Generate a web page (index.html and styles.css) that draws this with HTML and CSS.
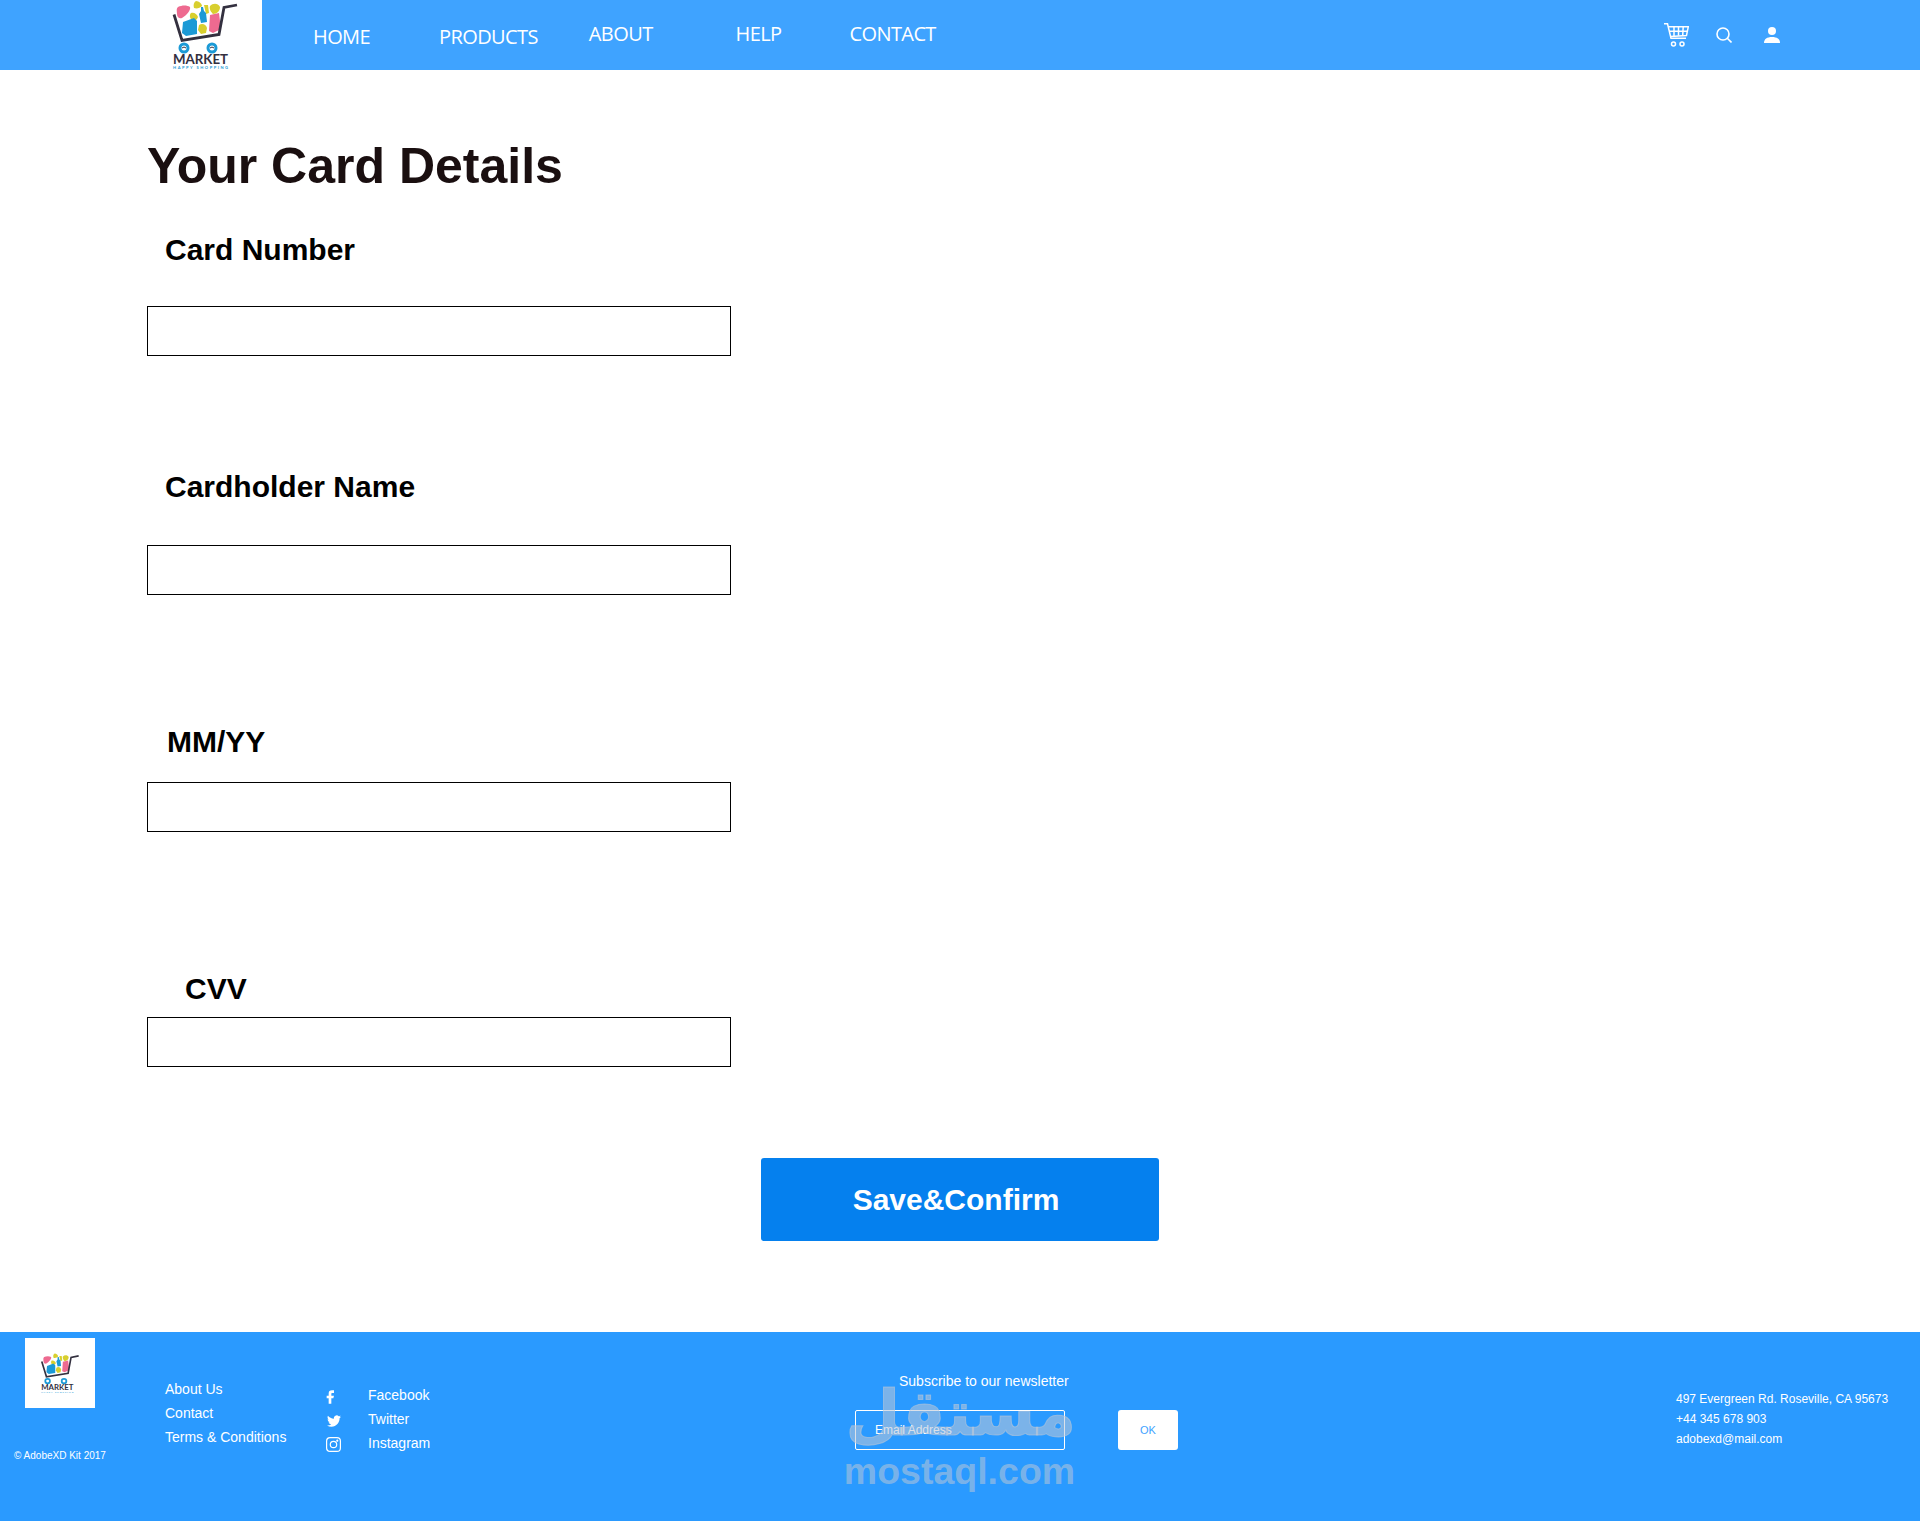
FILE: index.html
```html
<!DOCTYPE html>
<html lang="en">
<head>
<meta charset="utf-8">
<title>Your Card Details</title>
<link rel="stylesheet" href="styles.css">
</head>
<body>
<header class="topbar">
  <div class="brand">
    <svg class="brand-logo" viewBox="30 0 70 70">
      <path d="M37 7c4-2 9-2 12 0 1 3-3 8-8 11-3 1-5-1-5-4 0-3-1-5 1-7z" fill="#ee6a90"/>
      <path d="M55 1c3 0 6 3 6 5-2 2-5 3-8 2-1-3 0-6 2-7z" fill="#d8cf2e"/>
      <path d="M63 5l4 0 1 8-3 1z" fill="#d8cf2e"/>
      <path d="M69 6c3-3 8-3 10 1 0 4-3 7-7 7-2-2-4-5-3-8z" fill="#d8cf2e"/>
      <path d="M50 13c3-1 6 1 7 4-1 3-4 5-6 3-2-1-3-5-1-7z" fill="#d8cf2e"/>
      <path d="M60 7h2l1 4 2 2 1 9-6 1-2-9 2-3z" fill="#1c9ad6"/>
      <path d="M69 15l9-2 2 16-8 4-4-2z" fill="#ee6a90"/>
      <path d="M42 22l11-4 3 3 0 13-11 2-4-3z" fill="#1c9ad6"/>
      <path d="M58 25c3-2 7-1 8 3l-1 5-5 1-3-4z" fill="#d8cf2e"/>
      <path d="M96 5l-13 2.500-5 27-37 6-8-26" fill="none" stroke="#33303f" stroke-width="2.800"/>
      <circle cx="43" cy="48" r="4" fill="#fff" stroke="#1c9ad6" stroke-width="3"/>
      <circle cx="71" cy="48" r="4" fill="#fff" stroke="#1c9ad6" stroke-width="3"/>
      <path d="M41 48q2-2 4 0M69 48q2-2 4 0" fill="none" stroke="#33303f" stroke-width="1"/>
      <text x="59.500" y="64" class="logo-name" text-anchor="middle" textLength="55" lengthAdjust="spacingAndGlyphs">MARKET</text>
      <text x="59.500" y="69" class="logo-tag" text-anchor="middle" textLength="55" lengthAdjust="spacing">HAPPY SHOPPING</text>
    </svg>
  </div>
  <nav class="nav">
    <a class="nav-item nav-home">HOME</a>
    <a class="nav-item nav-products">PRODUCTS</a>
    <a class="nav-item nav-about">ABOUT</a>
    <a class="nav-item nav-help">HELP</a>
    <a class="nav-item nav-contact">CONTACT</a>
  </nav>
  <div class="tools">
    <svg class="tool-cart" viewBox="0 0 25 24" fill="none" stroke="#fff" stroke-width="1.500">
      <path d="M0 .8h3.500l3.500 14.500h15"/>
      <path d="M4.300 3.800h20l-1.800 8.700-16 .9"/>
      <path d="M5.200 8.200h18M10 3.800v9.300M14.500 3.800v9M19.200 3.800l-.5 8.900"/>
      <circle cx="9.500" cy="21" r="2"/><circle cx="18" cy="21" r="2"/>
    </svg>
    <svg class="tool-search" viewBox="0 0 16 16" fill="none" stroke="#fff" stroke-width="1.600">
      <circle cx="7" cy="7" r="6"/><path d="M11.300 11.300l4.200 4.200"/>
    </svg>
    <svg class="tool-user" viewBox="0 0 16 16" fill="#fff">
      <circle cx="8" cy="4" r="4"/><path d="M0 16c0-4 3-6 8-6s8 2 8 6z"/>
    </svg>
  </div>
</header>

<main class="checkout">
  <h1 class="title">Your Card Details</h1>
  <div class="field field-number">
    <label class="field-label label-number">Card Number</label>
    <input class="field-input" type="text">
  </div>
  <div class="field field-name">
    <label class="field-label label-name">Cardholder Name</label>
    <input class="field-input" type="text">
  </div>
  <div class="field field-expiry">
    <label class="field-label label-expiry">MM/YY</label>
    <input class="field-input" type="text">
  </div>
  <div class="field field-cvv">
    <label class="field-label label-cvv">CVV</label>
    <input class="field-input" type="text">
  </div>
  <button class="confirm" type="button">Save&amp;Confirm</button>
</main>

<footer class="footer">
  <div class="foot-brand">
    <div class="foot-logo">
      <svg class="foot-logo-art" viewBox="30 0 70 70">
        <path d="M37 7c4-2 9-2 12 0 1 3-3 8-8 11-3 1-5-1-5-4 0-3-1-5 1-7z" fill="#ee6a90"/>
        <path d="M55 1c3 0 6 3 6 5-2 2-5 3-8 2-1-3 0-6 2-7z" fill="#d8cf2e"/>
        <path d="M63 5l4 0 1 8-3 1z" fill="#d8cf2e"/>
        <path d="M69 6c3-3 8-3 10 1 0 4-3 7-7 7-2-2-4-5-3-8z" fill="#d8cf2e"/>
        <path d="M50 13c3-1 6 1 7 4-1 3-4 5-6 3-2-1-3-5-1-7z" fill="#d8cf2e"/>
        <path d="M60 7h2l1 4 2 2 1 9-6 1-2-9 2-3z" fill="#1c9ad6"/>
        <path d="M69 15l9-2 2 16-8 4-4-2z" fill="#ee6a90"/>
        <path d="M42 22l11-4 3 3 0 13-11 2-4-3z" fill="#1c9ad6"/>
        <path d="M58 25c3-2 7-1 8 3l-1 5-5 1-3-4z" fill="#d8cf2e"/>
        <path d="M96 5l-13 2.500-5 27-37 6-8-26" fill="none" stroke="#33303f" stroke-width="2.800"/>
        <circle cx="43" cy="48" r="4" fill="#fff" stroke="#1c9ad6" stroke-width="3"/>
        <circle cx="71" cy="48" r="4" fill="#fff" stroke="#1c9ad6" stroke-width="3"/>
        <text x="59.500" y="64" class="logo-name" text-anchor="middle" textLength="55" lengthAdjust="spacingAndGlyphs">MARKET</text>
        <text x="59.500" y="69" class="logo-tag" text-anchor="middle" textLength="55" lengthAdjust="spacing">HAPPY SHOPPING</text>
      </svg>
    </div>
    <p class="copyright">© AdobeXD Kit 2017</p>
  </div>
  <ul class="foot-links">
    <li>About Us</li>
    <li>Contact</li>
    <li>Terms &amp; Conditions</li>
  </ul>
  <ul class="foot-social">
    <li><span class="social-icon"><svg class="icon-fb" viewBox="6 2 12 20" fill="#fff"><path d="M18 2h-3a5 5 0 0 0-5 5v3H7v4h3v8h4v-8h3l1-4h-4V7a1 1 0 0 1 1-1h3z"/></svg></span>Facebook</li>
    <li><span class="social-icon"><svg class="icon-tw" viewBox="0 0 24 24" fill="#fff"><path d="M23.953 4.570a10 10 0 01-2.825.775 4.958 4.958 0 002.163-2.723c-.951.555-2.005.959-3.127 1.184a4.920 4.920 0 00-8.384 4.482C7.690 8.095 4.067 6.130 1.640 3.162a4.822 4.822 0 00-.666 2.475c0 1.710.870 3.213 2.188 4.096a4.904 4.904 0 01-2.228-.616v.060a4.923 4.923 0 003.946 4.827 4.996 4.996 0 01-2.212.085 4.936 4.936 0 004.604 3.417 9.867 9.867 0 01-6.102 2.105c-.390 0-.779-.023-1.170-.067a13.995 13.995 0 007.557 2.209c9.053 0 13.998-7.496 13.998-13.985 0-.210 0-.420-.015-.630A9.935 9.935 0 0024 4.590z"/></svg></span>Twitter</li>
    <li><span class="social-icon"><svg class="icon-ig" viewBox="0 0 15 15" fill="none" stroke="#fff" stroke-width="1.200"><rect x=".6" y=".6" width="13.800" height="13.800" rx="3.500"/><circle cx="7.500" cy="7.500" r="3.200"/><circle cx="11.300" cy="3.700" r=".5" fill="#fff"/></svg></span>Instagram</li>
  </ul>
  <div class="subscribe">
    <p class="subscribe-title">Subscribe to our newsletter</p>
    <div class="subscribe-row">
      <div class="email">Email Address</div>
      <button class="ok" type="button">OK</button>
    </div>
  </div>
  <address class="contact">
    <span>497 Evergreen Rd. Roseville, CA 95673</span>
    <span>+44 345 678 903</span>
    <span>adobexd@mail.com</span>
  </address>
  <div class="watermark" aria-hidden="true">
    <div class="watermark-ar" lang="ar" dir="rtl">مستقل</div>
    <div class="watermark-en">mostaql.com</div>
  </div>
</footer>
</body>
</html>
```
FILE: styles.css
```css
* { box-sizing: border-box; }
html { height: 1521px; overflow: hidden; }
html, body { margin: 0; padding: 0; background: #fff; }
body { width: 1920px; height: 1521px; font-family: "Liberation Sans", Arial, sans-serif; overflow: hidden; }

.logo-name { font-family: "Lato", sans-serif; font-size: 13.500px; font-weight: 700; fill: #33303f; }
.logo-tag { font-family: "Lato", sans-serif; font-size: 4px; font-weight: 700; fill: #1c9ad6; }

/* Header */
.topbar { height: 70px; background: #3fa3ff; display: flex; padding-left: 140px; }
.brand { width: 122px; height: 70px; background: #fff; display: flex; justify-content: center; flex: none; }
.brand-logo { width: 70px; height: 70px; margin-left: 10px; }
.nav { display: flex; font-family: "Open Sans", sans-serif; font-size: 20px; color: #fff; flex: none; }
.nav-item { display: block; line-height: 28px; letter-spacing: -0.6px; font-weight: 400; }
.nav-home { margin: 23px 0 0 51px; }
.nav-products { margin: 23px 0 0 69px; }
.nav-about { margin: 20px 0 0 51px; }
.nav-help { margin: 20px 0 0 83px; }
.nav-contact { margin: 20px 0 0 68px; }
.tools { margin-left: auto; margin-right: 140px; display: flex; align-items: flex-start; }
.tool-cart { width: 25px; height: 24px; margin-top: 23px; }
.tool-search { width: 16px; height: 16px; margin: 27px 0 0 27px; }
.tool-user { width: 16px; height: 16px; margin: 27px 0 0 32px; }

/* Form */
.checkout { height: 1262px; padding: 66px 0 0 147px; }
.title { margin: 0; font-size: 50px; line-height: 60px; font-weight: 700; color: #1a0f10; }
.field { display: flex; flex-direction: column; align-items: flex-start; }
.field-label { display: block; font-size: 30px; line-height: 36px; font-weight: 700; color: #000; }
.field-input { display: block; width: 584px; height: 50px; border: 1px solid #000; background: #fff; padding: 0; margin: 0; border-radius: 0; outline: none; }
.field-number { margin-top: 36px; }
.field-name { margin-top: 113px; }
.field-expiry { margin-top: 129px; }
.field-cvv { margin-top: 139px; }
.label-number { margin: 0 0 38px 18px; }
.label-name { margin: 0 0 40px 18px; }
.label-expiry { margin: 0 0 22px 20px; }
.label-cvv { margin: 0 0 10px 38px; }
.confirm { display: block; width: 398px; height: 83px; margin: 91px 0 0 614px; background: #0580ee; color: #fff; border: 0; border-radius: 3px; font-family: inherit; font-size: 30px; font-weight: 700; padding: 0 8px 0 0; }

/* Footer */
.footer { position: relative; height: 189px; background: #2a9aff; color: #fff; display: flex; align-items: flex-start; overflow: hidden; }
.foot-brand { width: 165px; flex: none; padding: 6px 0 0 14px; }
.foot-logo { width: 70px; height: 70px; margin-left: 11px; background: #fff; display: flex; align-items: center; justify-content: center; }
.foot-logo-art { width: 41px; height: 41px; }
.copyright { margin: 42px 0 0; font-size: 10px; line-height: 12px; white-space: nowrap; }
.foot-links, .foot-social { list-style: none; margin: 0; padding: 0; font-size: 14px; line-height: 24px; flex: none; }
.foot-links { width: 161px; padding-top: 45px; }
.foot-social { width: 529px; padding-top: 51px; }
.foot-social li { display: flex; align-items: center; height: 24px; }
.social-icon { width: 42px; flex: none; display: flex; align-items: center; height: 24px; }
.icon-fb { width: 8px; height: 14px; margin-top: 3px; }
.icon-tw { width: 14px; height: 14px; margin: 3px 0 0 1px; }
.icon-ig { width: 15px; height: 15px; margin-top: 3px; }
.subscribe { width: 340px; flex: none; padding-top: 41px; }
.subscribe-title { margin: 0 0 20px 44px; font-size: 14px; line-height: 17px; white-space: nowrap; }
.subscribe-row { display: flex; }
.email { width: 210px; height: 40px; border: 1px solid #fff; border-radius: 2px; padding-left: 19px; font-size: 12px; line-height: 39px; }
.ok { width: 60px; height: 40px; margin-left: 53px; background: #fff; color: #3fa3ff; border: 0; border-radius: 3px; font-family: inherit; font-size: 11px; padding: 0; }
.contact { margin-left: auto; width: 244px; padding-top: 57px; display: flex; flex-direction: column; font-style: normal; font-size: 12px; line-height: 20px; }
.contact span { white-space: nowrap; }
.watermark { position: absolute; left: 844px; top: 44px; width: 232px; color: rgba(190, 200, 215, 0.55); text-align: center; font-weight: 700; font-family: "DejaVu Sans", sans-serif; pointer-events: none; }
.watermark-ar { font-size: 63px; line-height: 76px; height: 76px; margin-left: 3px; -webkit-text-stroke: 1px rgba(190, 200, 215, 0.55); }
.watermark-en { font-family: "Liberation Sans", sans-serif; font-size: 37.500px; line-height: 38px; white-space: nowrap; margin-left: -1px; }
```
